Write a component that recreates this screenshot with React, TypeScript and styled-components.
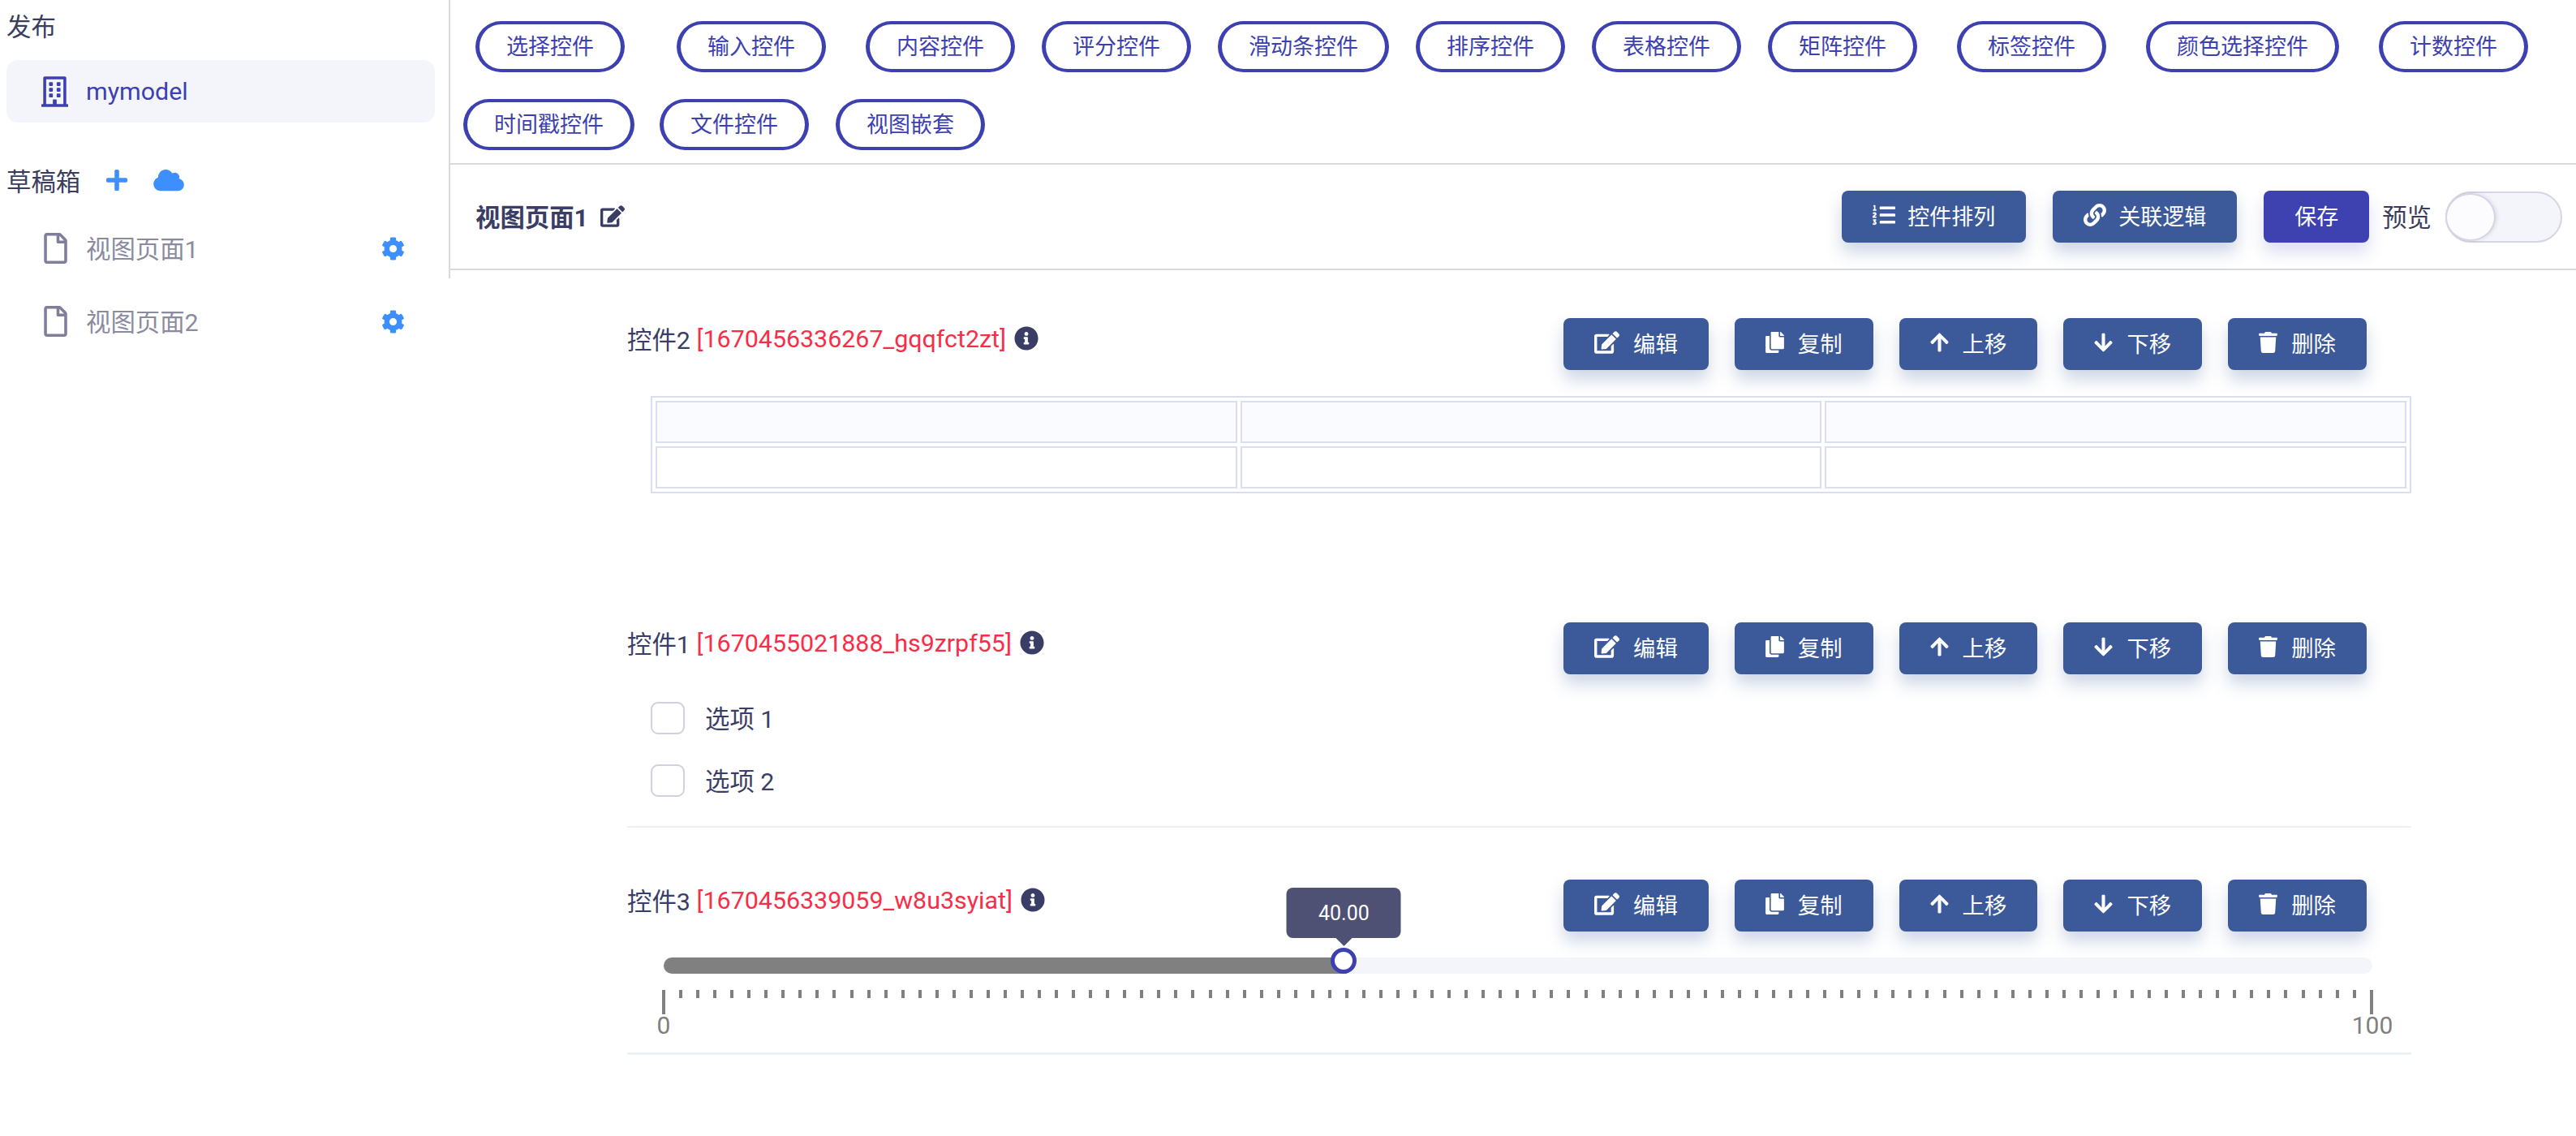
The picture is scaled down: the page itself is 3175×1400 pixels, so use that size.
import React from "react";
import styled, { createGlobalStyle } from "styled-components";
import {
  FaArrowDown,
  FaArrowUp,
  FaCloud,
  FaCog,
  FaCopy,
  FaEdit,
  FaInfoCircle,
  FaLink,
  FaListOl,
  FaPlus,
  FaRegBuilding,
  FaRegFile,
  FaTrash,
} from "react-icons/fa";

const Global = createGlobalStyle`
  html, body { margin: 0; padding: 0; background: #fff; }
  body {
    font-family: Roboto, "Noto Sans CJK SC", sans-serif;
    color: #3a3e66;
  }
  * { box-sizing: border-box; }
`;

const Page = styled.div`
  display: flex;
  align-items: flex-start;
  width: 3175px;
  height: 1400px;
  overflow: hidden;
`;

const Sidebar = styled.aside`
  flex: none;
  width: 555px;
  height: 343px;
  padding: 0 17px 0 8px;
  border-right: 2px solid #d8d8e2;
`;

const SectionTitle = styled.div<{ $top?: number }>`
  display: flex;
  align-items: center;
  height: 64px;
  margin-top: ${(p) => p.$top ?? 0}px;
  padding-bottom: 3px;
  font-size: 30.4px;
  color: #3a3d5c;
`;

const Glyph = styled.span<{ $w: number; $h: number; $color?: string }>`
  display: inline-flex;
  flex: none;
  color: ${(p) => p.$color ?? "inherit"};
  svg {
    display: block;
    width: ${(p) => p.$w}px;
    height: ${(p) => p.$h}px;
  }
`;

const IconAction = styled(Glyph)`
  margin-left: 32px;
`;

const Selected = styled.div`
  display: flex;
  align-items: center;
  gap: 22px;
  height: 77px;
  margin-top: 10px;
  padding-left: 43px;
  border-radius: 14px;
  background: #f4f5fb;
  color: #3c40b0;
  font-size: 30.4px;
`;

const DraftList = styled.div`
  margin-top: 6px;
`;

const DraftItem = styled.div`
  display: flex;
  align-items: center;
  height: 90px;
  padding: 0 37px 0 46px;
  color: #8b8b9f;
  font-size: 30.4px;
`;

const DraftName = styled.span`
  flex: 1;
  margin-left: 23px;
  padding-bottom: 3px;
`;

const Main = styled.main`
  flex: 1;
  min-width: 0;
`;

const Palette = styled.div`
  display: flex;
  flex-wrap: wrap;
  gap: 33px;
  padding: 26px 16px 16px;
  border-bottom: 2px solid #d8d8e2;
`;

const Pill = styled.div<{ $indent?: number }>`
  display: flex;
  align-items: center;
  height: 63px;
  margin-left: ${(p) => p.$indent ?? 0}px;
  padding: 0 33px 4px;
  border-style: solid;
  border-width: 4px 5px;
  border-color: #3c40b0;
  border-radius: 32px;
  color: #3c40b0;
  font-size: 27px;
  white-space: nowrap;
`;

const HeaderBar = styled.div`
  display: flex;
  align-items: center;
  height: 130px;
  padding: 0 17px 0 31px;
  border-bottom: 2px solid #d8d8e2;
`;

const Title = styled.div`
  display: flex;
  align-items: center;
  gap: 15px;
  padding-bottom: 2px;
  font-size: 30.4px;
  font-weight: 700;
  color: #3a3d66;
`;

const Toolbar = styled.div`
  display: flex;
  align-items: center;
  margin-left: auto;
`;

const Button = styled.div<{ $primary?: boolean; $gap?: number }>`
  display: flex;
  align-items: center;
  gap: 15px;
  height: 64px;
  margin-left: ${(p) => p.$gap ?? 0}px;
  padding: 0 38px 4px;
  border-radius: 8px;
  background: ${(p) => (p.$primary ? "#3d42b0" : "#3c5a99")};
  box-shadow: 0 12px 20px ${(p) => (p.$primary ? "rgba(61,66,176,.18)" : "rgba(60,90,153,.25)")};
  color: #fff;
  font-size: 27px;
  white-space: nowrap;
`;

const PreviewLabel = styled.span`
  margin: 0 17px 0 16px;
  padding-bottom: 3px;
  font-size: 30.4px;
  color: #3a3d5c;
`;

const Toggle = styled.div`
  display: flex;
  width: 144px;
  height: 63px;
  border: 2px solid #d5d5e3;
  border-radius: 32px;
  background: #f4f5fb;
`;

const ToggleKnob = styled.div`
  width: 62px;
  height: 100%;
  margin-left: -2px;
  border: 2px solid #d5d5e3;
  border-radius: 50%;
  background: #fcfcff;
  box-shadow: 2px 0 4px rgba(60, 64, 110, 0.12);
`;

const Canvas = styled.div`
  padding: 59px 203px 0 218px;
`;

const Block = styled.section<{ $top?: number; $rule?: number; $pad?: number }>`
  margin-top: ${(p) => p.$top ?? 0}px;
  padding-bottom: ${(p) => p.$pad ?? 0}px;
  border-bottom: ${(p) => (p.$rule ? `${p.$rule}px solid #eef0f8` : "none")};
`;

const BlockHead = styled.div`
  display: flex;
  align-items: flex-start;
  justify-content: space-between;
  padding-right: 55px;
`;

const Label = styled.div`
  display: flex;
  align-items: center;
  height: 50px;
  font-size: 30.4px;
  white-space: pre;
`;

const Id = styled.span`
  color: #f82e48;
`;

const InfoGlyph = styled(Glyph)`
  margin-left: 10px;
`;

const Actions = styled.div`
  display: flex;
  gap: 32px;
`;

const ActionButton = styled(Button)`
  gap: 17px;
  font-size: 27.4px;
`;

const Table = styled.table`
  width: calc(100% - 29px);
  margin: 32px 0 0 29px;
  border: 2px solid #dadef2;
  border-collapse: separate;
  border-spacing: 4px;
  table-layout: fixed;
`;

const Cell = styled.td<{ $head?: boolean }>`
  height: 52px;
  padding: 0;
  border: 2px solid #dadef2;
  background: ${(p) => (p.$head ? "#fafbff" : "#fff")};
`;

const Options = styled.div`
  display: flex;
  flex-direction: column;
  gap: 37px;
  margin: 34px 0 0 29px;
`;

const Option = styled.label`
  display: flex;
  align-items: center;
  gap: 25px;
  height: 40px;
  font-size: 30.4px;
`;

const OptionText = styled.span`
  padding-bottom: 3px;
`;

const CheckBox = styled.span`
  width: 42px;
  height: 40px;
  border: 2px solid #d0d0e0;
  border-radius: 9px;
`;

const SliderArea = styled.div`
  margin: 32px 48px 0 45px;
`;

const Track = styled.div`
  position: relative;
  height: 20px;
  border-radius: 10px;
  background: #f4f5fb;
`;

const Fill = styled.div`
  height: 100%;
  border-radius: 10px 0 0 10px;
  background: #808080;
`;

const Knob = styled.div`
  position: absolute;
  top: -12px;
  width: 32px;
  height: 32px;
  border: 5px solid #3c40b0;
  border-radius: 50%;
  background: #fff;
`;

const Bubble = styled.div`
  position: absolute;
  bottom: calc(100% + 17px);
  left: 50%;
  display: flex;
  align-items: center;
  justify-content: center;
  width: 141px;
  height: 62px;
  border-radius: 8px;
  background: #4e5074;
  color: #fff;
  font-size: 25px;
  transform: translateX(-50%);
  &::after {
    content: "";
    position: absolute;
    top: 100%;
    left: 50%;
    margin-left: -10px;
    border: 10px solid transparent;
    border-bottom: 0;
    border-top-color: #4e5074;
  }
`;

const Ticks = styled.div`
  display: flex;
  align-items: flex-start;
  justify-content: space-between;
  margin: 20px -2px 0;
`;

const Tick = styled.i<{ $major?: boolean }>`
  display: block;
  width: 4px;
  height: ${(p) => (p.$major ? 30 : 10)}px;
  background: #808080;
`;

const TickLabels = styled.div`
  display: flex;
  justify-content: space-between;
  height: 28px;
  color: #808080;
  font-size: 30px;
  line-height: 28px;
`;

const TickLabel = styled.span`
  display: flex;
  justify-content: center;
  width: 0;
`;

const pills: [string, number?][] = [
  ["选择控件", 15],
  ["输入控件", 31],
  ["内容控件", 16],
  ["评分控件"],
  ["滑动条控件"],
  ["排序控件"],
  ["表格控件"],
  ["矩阵控件"],
  ["标签控件", 16],
  ["颜色选择控件", 16],
  ["计数控件", 16],
  ["时间戳控件"],
  ["文件控件", -2],
  ["视图嵌套"],
];

const BlockActions = () => (
  <Actions>
    <ActionButton>
      <Glyph $w={31} $h={28}><FaEdit /></Glyph>编辑
    </ActionButton>
    <ActionButton>
      <Glyph $w={23} $h={26}><FaCopy /></Glyph>复制
    </ActionButton>
    <ActionButton>
      <Glyph $w={23} $h={26}><FaArrowUp /></Glyph>上移
    </ActionButton>
    <ActionButton>
      <Glyph $w={23} $h={26}><FaArrowDown /></Glyph>下移
    </ActionButton>
    <ActionButton>
      <Glyph $w={23} $h={26}><FaTrash /></Glyph>删除
    </ActionButton>
  </Actions>
);

const Head = ({ name, id }: { name: string; id: string }) => (
  <BlockHead>
    <Label>
      {name} <Id>[{id}]</Id>
      <InfoGlyph $w={30} $h={30} $color="#3a3d66"><FaInfoCircle /></InfoGlyph>
    </Label>
    <BlockActions />
  </BlockHead>
);

const SLIDER_VALUE = 40;

export default function App() {
  return (
    <Page>
      <Global />
      <Sidebar>
        <SectionTitle>发布</SectionTitle>
        <Selected>
          <Glyph $w={33} $h={38}><FaRegBuilding /></Glyph>
          mymodel
        </Selected>
        <SectionTitle $top={40}>
          草稿箱
          <IconAction $w={26} $h={30} $color="#3e8ffe"><FaPlus /></IconAction>
          <IconAction $w={38} $h={30} $color="#3e8ffe"><FaCloud /></IconAction>
        </SectionTitle>
        <DraftList>
          {["视图页面1", "视图页面2"].map((name) => (
            <DraftItem key={name}>
              <Glyph $w={29} $h={38} $color="#7f7f9c"><FaRegFile /></Glyph>
              <DraftName>{name}</DraftName>
              <Glyph $w={29} $h={29} $color="#3e8ffe"><FaCog /></Glyph>
            </DraftItem>
          ))}
        </DraftList>
      </Sidebar>
      <Main>
        <Palette>
          {pills.map(([text, indent]) => (
            <Pill key={text} $indent={indent}>{text}</Pill>
          ))}
        </Palette>
        <HeaderBar>
          <Title>
            视图页面1
            <Glyph $w={30} $h={27}><FaEdit /></Glyph>
          </Title>
          <Toolbar>
            <Button>
              <Glyph $w={28} $h={28}><FaListOl /></Glyph>控件排列
            </Button>
            <Button $gap={33}>
              <Glyph $w={28} $h={28}><FaLink /></Glyph>关联逻辑
            </Button>
            <Button $primary $gap={33}>保存</Button>
            <PreviewLabel>预览</PreviewLabel>
            <Toggle><ToggleKnob /></Toggle>
          </Toolbar>
        </HeaderBar>
        <Canvas>
          <Block>
            <Head name="控件2" id="1670456336267_gqqfct2zt" />
            <Table>
              <tbody>
                <tr><Cell $head /><Cell $head /><Cell $head /></tr>
                <tr><Cell /><Cell /><Cell /></tr>
              </tbody>
            </Table>
          </Block>
          <Block $top={159} $rule={2} $pad={36}>
            <Head name="控件1" id="1670455021888_hs9zrpf55" />
            <Options>
              <Option><CheckBox /><OptionText>选项 1</OptionText></Option>
              <Option><CheckBox /><OptionText>选项 2</OptionText></Option>
            </Options>
          </Block>
          <Block $top={64} $rule={3} $pad={19}>
            <Head name="控件3" id="1670456339059_w8u3syiat" />
            <SliderArea>
              <Track>
                <Fill style={{ width: `${SLIDER_VALUE}%` }} />
                <Knob style={{ left: `calc(${SLIDER_VALUE}% - 20px)` }}>
                  <Bubble>{SLIDER_VALUE.toFixed(2)}</Bubble>
                </Knob>
              </Track>
              <Ticks>
                {Array.from({ length: 101 }, (_, i) => (
                  <Tick key={i} $major={i === 0 || i === 100} />
                ))}
              </Ticks>
              <TickLabels>
                <TickLabel>0</TickLabel>
                <TickLabel>100</TickLabel>
              </TickLabels>
            </SliderArea>
          </Block>
        </Canvas>
      </Main>
    </Page>
  );
}
